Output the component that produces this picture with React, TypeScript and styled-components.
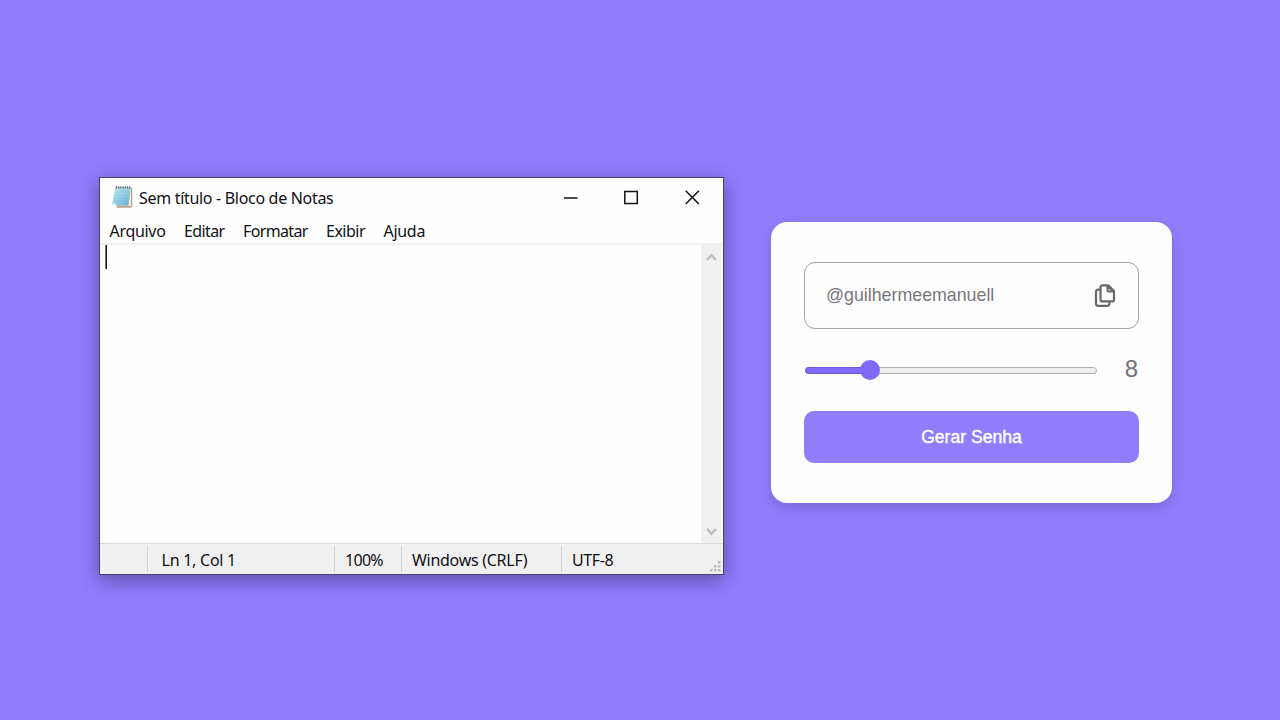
import React from 'react';
import styled, { createGlobalStyle } from 'styled-components';

const GlobalStyle = createGlobalStyle`
  * { box-sizing: border-box; }
  body { margin: 0; background: #917cfc; overflow: hidden; }
`;

const Page = styled.main`
  display: flex;
  align-items: flex-start;
  gap: 47px;
  width: 1280px;
  height: 720px;
  padding: 177px 0 0 99px;
  background: #917cfc;
`;

const NotepadWindow = styled.section`
  display: flex;
  flex-direction: column;
  width: 625px;
  height: 398px;
  border: 1px solid #4a4170;
  background: #fefefe;
  color: #101014;
  font-family: 'Noto Sans', 'Open Sans', sans-serif;
  font-size: 16px;
  line-height: 22px;
  box-shadow: 0 5px 18px rgba(40, 25, 80, 0.48);
`;

const TitleBar = styled.header`
  display: flex;
  align-items: center;
  height: 40px;
  padding-left: 12px;
`;

const Title = styled.span`
  flex: 1;
  margin-left: 5px;
  letter-spacing: -0.31px;
  white-space: nowrap;
`;

const WindowButtons = styled.div`
  display: flex;
  gap: 46px;
  padding: 0 23px 2px 0;
  svg { display: block; }
`;

const MenuBar = styled.nav`
  display: flex;
  height: 27px;
  padding-left: 9.5px;
  border-bottom: 2px solid #f0f0f1;
`;

const MenuItem = styled.span<{ $width: number; $spacing?: number }>`
  width: ${(p) => p.$width}px;
  height: 25px;
  line-height: 26px;
  letter-spacing: ${(p) => p.$spacing ?? -0.3}px;
  white-space: nowrap;
`;

const Editor = styled.div`
  display: flex;
  flex: 1;
  justify-content: space-between;
`;

const Caret = styled.div`
  width: 2px;
  height: 24px;
  margin-left: 5px;
  border-left: 1px solid #77777a;
  background: #111;
`;

const ScrollBar = styled.div`
  display: flex;
  flex-direction: column;
  justify-content: space-between;
  align-items: center;
  width: 21px;
  margin-right: 1px;
  padding: 8px 0 7px;
  background: #f0f0f1;
`;

const StatusBar = styled.footer`
  display: flex;
  height: 31px;
  padding: 2px 2px 1px 0;
  border-top: 1px solid #d9d9db;
  background: #f0f0f1;
`;

const StatusCell = styled.span<{ $width?: number; $indent?: number; $spacing?: number }>`
  width: ${(p) => (p.$width ? `${p.$width}px` : 'auto')};
  flex: ${(p) => (p.$width ? 'none' : 1)};
  padding-left: ${(p) => p.$indent ?? 10}px;
  border-right: ${(p) => (p.$width ? '1px solid #d3d3da' : 'none')};
  line-height: 28px;
  letter-spacing: ${(p) => p.$spacing ?? -0.4}px;
  white-space: nowrap;
`;

const Grip = styled.svg`
  align-self: flex-end;
`;

const Card = styled.section`
  width: 401px;
  height: 281px;
  margin-top: 45px;
  padding: 40px 33px;
  border-radius: 16px;
  background: #fefefe;
  font-family: 'Liberation Sans', Arial, sans-serif;
  box-shadow: 0 5px 12px rgba(50, 30, 90, 0.2);
`;

const PasswordField = styled.div`
  display: flex;
  align-items: center;
  justify-content: space-between;
  height: 67px;
  padding: 0 21px 0 21px;
  border: 1px solid #a2a2a8;
  border-radius: 11px;
  color: #77777a;
  font-size: 17.8px;
`;

const SliderRow = styled.div`
  display: flex;
  align-items: center;
  justify-content: space-between;
  height: 82px;
  padding: 0 1px 2px 1px;
  color: #6f6f73;
  font-size: 24px;
`;

const Track = styled.div`
  display: flex;
  align-items: center;
  width: 292px;
  height: 7px;
  margin-top: 2px;
  border: 1px solid #acacb0;
  border-radius: 4px;
  background: #efeff0;
`;

const Fill = styled.div`
  width: 61px;
  height: 7px;
  margin-left: -1px;
  border-radius: 4px 0 0 4px;
  border: 1px solid #7059d8;
  background: #8069f7;
  flex: none;
`;

const Thumb = styled.div`
  width: 20px;
  height: 20px;
  margin-left: -6px;
  border-radius: 50%;
  background: #8069f7;
  flex: none;
`;

const GenerateButton = styled.button`
  display: block;
  width: 335px;
  height: 52px;
  padding: 0;
  border: 0;
  border-radius: 10px;
  background: #917cfc;
  color: #fefefe;
  font: 17.6px 'Liberation Sans', Arial, sans-serif;
  -webkit-text-stroke: 0.4px #fefefe;
`;

function NotepadIcon() {
  return (
    <svg width="22" height="24" viewBox="0 0 22 24">
      <defs>
        <linearGradient id="paper" x1="0" y1="0" x2="1" y2="1">
          <stop offset="0" stopColor="#c7e9f3" />
          <stop offset="0.55" stopColor="#8fcde3" />
          <stop offset="1" stopColor="#6badc9" />
        </linearGradient>
      </defs>
      <path d="M17 2h3.3v18.2l-1.3 1.6H4l1-2z" fill="#b8a58c" />
      <path d="M18 3h1v17H5l10-1z" fill="#f5eddc" />
      <path d="M3.2 1.5h15.6L16.5 19.8 0 19z" fill="url(#paper)" />
      <path d="M2.8 6h14M2.4 9h14M1.8 12h14M1.3 15h14" stroke="#79b9d2" strokeWidth=".6" opacity=".6" />
      <path d="M0 19l2-3 2 3.2z" fill="#def4fa" />
      <path d="M3.2 1.7h15.6" stroke="#b8cbd1" strokeWidth="1.5" />
      <path d="M4.5 .3v2.2M6.7 .3v2.2M8.9 .3v2.2M11.1 .3v2.2M13.3 .3v2.2M15.5 .3v2.2M17.7 .3v2.2" stroke="#52626a" strokeWidth="1" />
    </svg>
  );
}

function CopyIcon() {
  return (
    <svg width="23" height="24" viewBox="0 0 23 24" fill="none" stroke="#68686d" strokeWidth="2.2" strokeLinejoin="round" strokeLinecap="round">
      <path d="M8.5 1.3h5.7L20 7v8.4a2 2 0 0 1-2 2H8.5a2 2 0 0 1-2-2V3.3a2 2 0 0 1 2-2z" />
      <path d="M13.4 2v4a1.6 1.6 0 0 0 1.6 1.6h4.4l-6-5.6z" fill="#68686d" fillOpacity=".3" strokeWidth="1.8" />
      <path d="M5.5 5.6H4a2 2 0 0 0-2 2v12.2a2 2 0 0 0 2 2h9.4a2 2 0 0 0 2-2v-1.2" />
    </svg>
  );
}

function Chevron({ down = false }: { down?: boolean }) {
  return (
    <svg width="11" height="9" viewBox="0 0 11 9" fill="none" stroke="#bcbcbf" strokeWidth="2.4">
      <path d={down ? 'M1 2l4.5 4.7L10 2' : 'M1 7l4.5-4.7L10 7'} />
    </svg>
  );
}

export default function App() {
  return (
    <>
      <GlobalStyle />
      <Page>
        <NotepadWindow>
          <TitleBar>
            <NotepadIcon />
            <Title>Sem título - Bloco de Notas</Title>
            <WindowButtons>
              <svg width="15" height="15" stroke="#111" strokeWidth="1.5"><path d="M1 8h13.5" /></svg>
              <svg width="15" height="15" fill="none" stroke="#111" strokeWidth="1.5"><path d="M.8 1.5h12.5v12H.8z" /></svg>
              <svg width="15" height="15" stroke="#111" strokeWidth="1.5"><path d="M.7 .8l13.2 13.2M13.9 .8L.7 14" /></svg>
            </WindowButtons>
          </TitleBar>
          <MenuBar>
            <MenuItem $width={74.5}>Arquivo</MenuItem>
            <MenuItem $width={59} $spacing={-0.6}>Editar</MenuItem>
            <MenuItem $width={83} $spacing={-0.65}>Formatar</MenuItem>
            <MenuItem $width={57.5} $spacing={-0.5}>Exibir</MenuItem>
            <MenuItem $width={50}>Ajuda</MenuItem>
          </MenuBar>
          <Editor>
            <Caret />
            <ScrollBar>
              <Chevron />
              <Chevron down />
            </ScrollBar>
          </Editor>
          <StatusBar>
            <StatusCell $width={48} />
            <StatusCell $width={187} $indent={13.5} $spacing={-0.25}>Ln 1, Col 1</StatusCell>
            <StatusCell $width={67} $spacing={-0.7}>100%</StatusCell>
            <StatusCell $width={160} $spacing={-0.28}>Windows (CRLF)</StatusCell>
            <StatusCell>UTF-8</StatusCell>
            <Grip width="12" height="12" fill="#b9b9be">
              <path d="M9 0h2.5v2.5H9zM5 4h2.5v2.5H5zM9 4h2.5v2.5H9zM1 8h2.5v2.5H1zM5 8h2.5v2.5H5zM9 8h2.5v2.5H9z" />
            </Grip>
          </StatusBar>
        </NotepadWindow>
        <Card>
          <PasswordField>
            <span>@guilhermeemanuell</span>
            <CopyIcon />
          </PasswordField>
          <SliderRow>
            <Track>
              <Fill />
              <Thumb />
            </Track>
            <span>8</span>
          </SliderRow>
          <GenerateButton>Gerar Senha</GenerateButton>
        </Card>
      </Page>
    </>
  );
}
